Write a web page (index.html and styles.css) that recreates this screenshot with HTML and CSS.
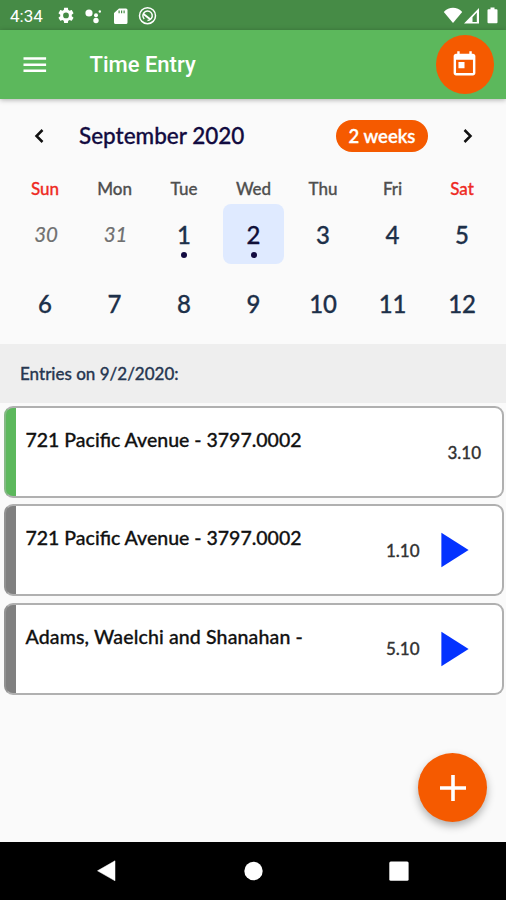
FILE: index.html
```html
<!DOCTYPE html>
<html lang="en">
<head>
<meta charset="utf-8">
<title>Time Entry</title>
<link rel="stylesheet" href="styles.css">
</head>
<body>
<div class="screen">
  <div class="status">
    <span class="clock">4:34</span>
    <svg class="status-left" width="100" height="20" viewBox="0 0 100 20" fill="#fff">
      <path transform="translate(-1.6 -.2) scale(.8)" d="M19.14 12.94c.04-.3.06-.61.06-.94 0-.32-.02-.64-.07-.94l2.03-1.58c.18-.14.23-.41.12-.61l-1.92-3.32c-.12-.22-.37-.29-.59-.22l-2.39.96c-.5-.38-1.03-.7-1.62-.94l-.36-2.54c-.04-.24-.24-.41-.48-.41h-3.84c-.24 0-.43.17-.47.41l-.36 2.54c-.59.24-1.13.57-1.62.94l-2.39-.96c-.22-.08-.47 0-.59.22L2.74 8.87c-.12.21-.08.47.12.61l2.03 1.58c-.05.3-.09.63-.09.94s.02.64.07.94l-2.03 1.58c-.18.14-.23.41-.12.61l1.92 3.32c.12.22.37.29.59.22l2.39-.96c.5.38 1.03.7 1.62.94l.36 2.54c.05.24.24.41.48.41h3.84c.24 0 .44-.17.47-.41l.36-2.54c.59-.24 1.13-.56 1.62-.94l2.39.96c.22.08.47 0 .59-.22l1.92-3.32c.12-.22.07-.47-.12-.61zM12 15.6A3.6 3.6 0 1 1 12 8.4a3.6 3.6 0 0 1 0 7.200z"/>
      <circle cx="31" cy="7" r="3.600"/><circle cx="38" cy="9.300" r="2"/><circle cx="38" cy="14.500" r="2.700"/><circle cx="41.800" cy="5.500" r="1.200"/>
      <path fill-rule="evenodd" d="M61 2.600h7a1.500 1.500 0 0 1 1.500 1.500v12.300a1.500 1.500 0 0 1-1.500 1.500H57.500a1.500 1.500 0 0 1-1.500-1.500V7zM60.500 4.500v2.700h1.200V4.500zM63 4.500v2.700h1.200V4.500zM65.500 4.500v2.700h1.200V4.500z"/>
      <g fill="none" stroke="#fff" transform="translate(-1 -.3)"><circle cx="90.500" cy="10" r="8" stroke-width="1.500"/><path d="M87.200 13.300a4.700 4.700 0 1 1 3.300 1.400" stroke-width="1.500"/><path d="M86.500 8.300l7 5.500" stroke-width="2"/></g>
    </svg>
    <svg class="status-right" width="58" height="20" viewBox="0 0 58 20" fill="#fff">
      <path d="M.8 6C6 .4 14 .4 19.200 6L10 17z"/>
      <path fill-rule="evenodd" d="M21 17.500L36 2v15.500zM29.500 16h4.300V6.600l-4.300 4.600z"/>
      <path d="M47.500 1.500h4v1.700h2a1 1 0 0 1 1 1v12.100a1 1 0 0 1-1 1h-8a1 1 0 0 1-1-1V4.200a1 1 0 0 1 1-1h2z"/>
    </svg>
  </div>
  <header class="appbar">
    <svg class="menu" width="24" height="18" viewBox="0 0 24 18" fill="#fff"><path d="M.5 1.200h22.600v2.500H.5zM.5 7.400h22.600v2.500H.5zM.5 13.500h22.600V16H.5z"/></svg>
    <h1>Time Entry</h1>
    <button class="today" aria-label="Today"><svg width="29" height="29" viewBox="0 0 24 24" fill="#fff"><path d="M19 3h-1V1h-2v2H8V1H6v2H5c-1.110 0-1.990.9-1.990 2L3 19c0 1.100.890 2 2 2h14c1.100 0 2-.9 2-2V5c0-1.100-.9-2-2-2zm0 16H5V8h14v11zM7 10h5v5H7z"/></svg></button>
  </header>
  <section class="calendar">
    <div class="month">
      <svg class="prev" width="12" height="16" viewBox="0 0 12 16"><path d="M9.500 2L3.500 8l6 6"/></svg>
      <h2>September 2020</h2>
      <span class="pill">2 weeks</span>
      <svg class="next" width="12" height="16" viewBox="0 0 12 16"><path d="M2.500 2l6 6-6 6"/></svg>
    </div>
    <div class="grid names"><span class="red">Sun</span><span>Mon</span><span>Tue</span><span>Wed</span><span>Thu</span><span>Fri</span><span class="red">Sat</span></div>
    <div class="grid days">
      <span class="out">30</span><span class="out">31</span><span class="dot">1</span><span class="dot selected">2</span><span>3</span><span>4</span><span>5</span>
      <span>6</span><span>7</span><span>8</span><span>9</span><span>10</span><span>11</span><span>12</span>
    </div>
  </section>
  <div class="label"><span>Entries on 9/2/2020:</span></div>
  <main class="entries">
    <article class="entry active"><h3>721 Pacific Avenue - 3797.0002</h3><span class="hours">3.10</span></article>
    <article class="entry"><h3>721 Pacific Avenue - 3797.0002</h3><span class="hours">1.10</span><svg class="play" width="28" height="36" viewBox="0 0 28 36"><path d="M.4.700L27.600 18 .4 35.300z"/></svg></article>
    <article class="entry"><h3 class="wide">Adams, Waelchi and Shanahan -</h3><span class="hours">5.10</span><svg class="play" width="28" height="36" viewBox="0 0 28 36"><path d="M.4.700L27.600 18 .4 35.300z"/></svg></article>
  </main>
  <button class="add" aria-label="Add"><svg width="26" height="26" viewBox="0 0 26 26"><path d="M13 0v26M0 13h26" stroke="#fff" stroke-width="3.600"/></svg></button>
  <nav class="navbar">
    <svg width="20" height="22" viewBox="0 0 20 22"><path d="M18 .8v20L.5 10.800z" fill="#fff" stroke="#fff" stroke-linejoin="round" stroke-width=".5"/></svg>
    <svg width="20" height="20" viewBox="0 0 20 20"><circle cx="10.500" cy="10" r="9.200" fill="#fff"/></svg>
    <svg width="20" height="20" viewBox="0 0 20 20"><rect x=".3" y=".5" width="19.300" height="19.300" rx="1.500" fill="#fff"/></svg>
  </nav>
</div>
</body>
</html>
```
FILE: styles.css
```css
* { box-sizing: border-box; }
body { margin: 0; background: #fafafa; font-family: Lato, "Liberation Sans", sans-serif; }
h1, h2, h3 { margin: 0; white-space: nowrap; }
svg { display: block; flex: none; }
button { border: 0; padding: 0; background: #f55a00; border-radius: 50%; display: grid; place-items: center; }
.screen { position: relative; width: 506px; height: 900px; display: flex; flex-direction: column; overflow: hidden; background: #fafafa; }
.status { height: 30px; flex: none; display: flex; align-items: center; padding: 1px 5px 0 10px; background: #468b46; }
.clock { width: 48px; font: 400 17px/20px Roboto, sans-serif; color: #fff; }
.status-right { margin-left: auto; margin-right: 0; }
.appbar { height: 69px; flex: none; display: flex; align-items: center; padding: 0 12px 0 23px; background: #5cb85c; box-shadow: 0 1px 5px rgba(0,0,0,.3); z-index: 1; }
.menu { margin-right: 42.500px; }
h1 { font: 500 22px/28px Roboto, sans-serif; color: #fff; padding-top: 1px; }
.today { width: 58.500px; height: 58.500px; margin-left: auto; }
.today svg { margin-top: -1px; }
.calendar { height: 244.500px; flex: none; padding: 0 10px; }
.month { height: 74px; display: flex; align-items: center; padding: 0 22px 0 23px; }
.month svg { fill: none; stroke: #111; stroke-width: 2.500; }
h2, h3, .pill, .names, .days, .label, .hours { -webkit-text-stroke: .3px currentColor; }
h2 { margin-left: 34px; font-size: 22.500px; font-weight: 500; line-height: 30px; color: #120b40; }
.pill { width: 92px; height: 32px; margin-left: auto; margin-right: 34px; border-radius: 16px; background: #f55a00; color: #fff; font-size: 18.500px; font-weight: 600; line-height: 33px; text-align: center; }
.grid { display: grid; grid-template-columns: repeat(7, 69.500px); }
.names { height: 26px; padding-left: .3px; font-size: 17px; font-weight: 500; line-height: 32px; color: #4f4f4f; text-align: center; }
.names .red { color: #ee2b24; }
.days { grid-auto-rows: 69.500px; padding-left: .3px; }
.days span { position: relative; margin: 4.500px; border-radius: 8px; text-align: center; font-size: 24px; font-weight: 500; line-height: 62px; color: #1d3049; }
.days .out { padding-left: 2px; font-size: 20.500px; line-height: 60px; font-style: italic; font-weight: 400; color: #707070; -webkit-text-stroke-width: .2px; }
.days .selected { background: #dfeaff; color: #101038; }
.days .dot::after { content: ""; position: absolute; left: calc(50% - 3px); bottom: 6px; width: 6px; height: 6px; border-radius: 50%; background: #120b40; }
.label { height: 59px; flex: none; padding: 0 20px; background: #eee; color: #273751; font-size: 17px; font-weight: 500; line-height: 60px; }
.entries { display: grid; gap: 6.400px; padding: 3.500px 2.500px 0 4px; }
.entry { height: 92px; display: flex; align-items: center; padding: 0 20.500px 0 0; border: 2px solid #b0b0b0; border-radius: 9px; background: linear-gradient(to right, #808080 10px, #fff 10px); }
.entry:not(.active) { border-left-color: #929292; }
.active { border-left-color: #85b885; background: linear-gradient(to right, #5cb85c 10px, #fff 10px); }
h3 { align-self: flex-start; margin: 18px auto 0 19.500px; font-size: 19.500px; font-weight: 500; line-height: 28px; color: #111; }
.wide { letter-spacing: .14px; }
.hours { padding-top: 1px; font-size: 17px; font-weight: 500; line-height: 24px; color: #333; }
.play { margin: 0 12.500px 0 21px; fill: #0433ff; }
.add { position: absolute; left: 418px; top: 753px; width: 69px; height: 69px; box-shadow: 0 4px 8px rgba(0,0,0,.3); }
.navbar { height: 58px; flex: none; margin-top: auto; display: flex; align-items: center; justify-content: space-between; padding: 0 97px 0 97px; background: #000; }
```
